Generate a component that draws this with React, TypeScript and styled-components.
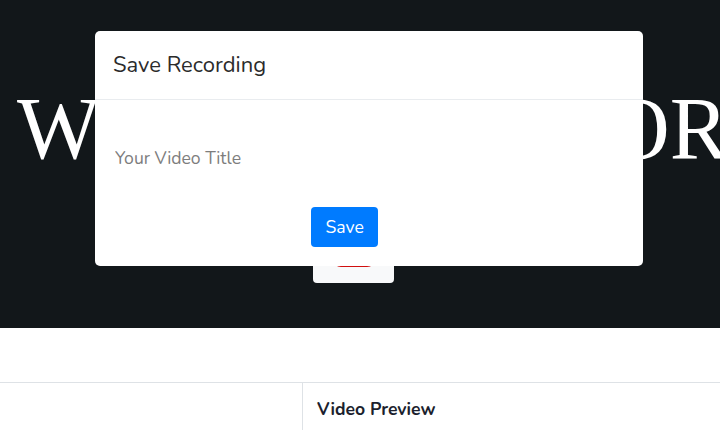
import React, { useState } from "react";
import styled, { createGlobalStyle } from "styled-components";

const GlobalStyle = createGlobalStyle`
  html, body {
    margin: 0;
    padding: 0;
    background: #ffffff;
    font-family: "Nunito", "Open Sans", "Noto Sans", sans-serif;
    font-size: 17.6px;
    color: #212529;
    overflow: hidden;
  }
  * {
    box-sizing: border-box;
  }
`;

const App = () => {
  const [title, setTitle] = useState("");

  return (
    <Page>
      <GlobalStyle />
      <Hero>
        <HeroTitle>WEBCAM RECORDER</HeroTitle>
        <RecordButton>
          <RecordDot />
        </RecordButton>
      </Hero>
      <Content>
        <PreviewRow>
          <SideColumn />
          <MainColumn>
            <SectionTitle>Video Preview</SectionTitle>
          </MainColumn>
        </PreviewRow>
      </Content>

      <ModalDialog>
        <ModalHeader>
          <ModalTitle>Save Recording</ModalTitle>
        </ModalHeader>
        <ModalBody>
          <TitleInput
            value={title}
            onChange={(e) => setTitle(e.target.value)}
            placeholder="Your Video Title"
          />
          <ButtonRow>
            <SaveButton>Save</SaveButton>
          </ButtonRow>
        </ModalBody>
      </ModalDialog>
    </Page>
  );
};

const Page = styled.div`
  position: relative;
  width: 720px;
  height: 430px;
  overflow: hidden;
`;

const Hero = styled.section`
  height: 328px;
  background: #12171a;
  padding-top: 76px;
  display: flex;
  flex-direction: column;
`;

const HeroTitle = styled.h1`
  margin: 0;
  padding-left: 17px;
  font-family: "Liberation Serif", "Times New Roman", serif;
  font-weight: 400;
  font-size: 88px;
  line-height: 1.2;
  color: #ffffff;
  white-space: nowrap;
`;

const RecordButton = styled.button`
  align-self: flex-start;
  margin: 30px 0 0 313px;
  width: 81px;
  height: 71px;
  border: none;
  border-radius: 4px;
  background: #f8f9fa;
  display: flex;
  justify-content: center;
  align-items: flex-end;
  padding: 0 0 15.5px;
`;

const RecordDot = styled.span`
  display: block;
  width: 42px;
  height: 40px;
  border-radius: 8px;
  background: #d10f0f;
`;

const Content = styled.section`
  padding-top: 54px;
`;

const PreviewRow = styled.div`
  display: flex;
  border-top: 1px solid #dee2e6;
`;

const SideColumn = styled.div`
  width: 303px;
  height: 60px;
  border-right: 1px solid #dee2e6;
`;

const MainColumn = styled.div`
  flex: 1;
  padding: 13px 14px;
`;

const SectionTitle = styled.h5`
  margin: 0;
  font-size: 17.6px;
  font-weight: 700;
  line-height: 1.5;
  color: #1c1f2e;
`;

const ModalDialog = styled.div`
  position: absolute;
  top: 31px;
  left: 95px;
  width: 548px;
  background: #ffffff;
  border-radius: 5px;
  overflow: hidden;
`;

const ModalHeader = styled.div`
  height: 69px;
  padding: 0 18px;
  display: flex;
  align-items: center;
  border-bottom: 1px solid #e9ecef;
`;

const ModalTitle = styled.h5`
  margin: 0;
  font-size: 22px;
  font-weight: 400;
  line-height: 1.5;
  color: #2b2b2b;
`;

const ModalBody = styled.div`
  padding: 39px 20px 19px;
  display: flex;
  flex-direction: column;
`;

const TitleInput = styled.input`
  height: 38px;
  border: none;
  outline: none;
  padding: 0;
  font-family: inherit;
  font-size: 17.6px;
  color: #495057;
  background: transparent;

  &::placeholder {
    color: #7d7d7d;
  }
`;

const ButtonRow = styled.div`
  margin-top: 30px;
  padding-left: 196px;
  display: flex;
`;

const SaveButton = styled.button`
  height: 40px;
  padding: 0 14.5px;
  border: none;
  border-radius: 4px;
  background: #007bff;
  color: #ffffff;
  font-family: inherit;
  font-size: 17.6px;
  cursor: pointer;
`;

export default App;
